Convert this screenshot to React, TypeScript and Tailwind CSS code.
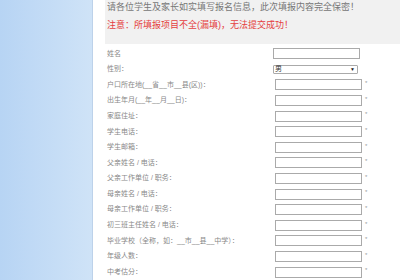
import React from 'react';

const rows = [
  '户口所在地(__省__市__县(区))：',
  '出生年月(__年__月__日)：',
  '家庭住址：',
  '学生电话：',
  '学生邮箱：',
  '父亲姓名 / 电话：',
  '父亲工作单位 / 职务：',
  '母亲姓名 / 电话：',
  '母亲工作单位 / 职务：',
  '初三班主任姓名 / 电话：',
  '毕业学校（全称，如：__市__县__中学）：',
  '年级人数：',
  '中考估分：',
];

const font = { fontFamily: '"Liberation Sans", "Noto Sans CJK SC", sans-serif' };

export default function App() {
  return (
    <div className="flex h-[280px] w-[400px] overflow-hidden bg-white" style={font}>
      {/* 左侧蓝色边栏 */}
      <div className="h-full w-[92px] shrink-0 bg-gradient-to-r from-[#b7d4f4] to-[#cfe3f7]" />
      <div className="h-full w-px bg-[#bdd2ea]" />
      <div className="flex-1 pl-[12px]">
        <div className="h-[44px] bg-[#f1f1f1] pl-[2px] pt-[1px]">
          <p className="text-[9px] leading-[13px] text-[#777]">
            请各位学生及家长如实填写报名信息，此次填报内容完全保密！
          </p>
          <p className="mt-[5px] text-[9px] leading-[13px] text-[#e54040]">
            注意：所填报项目不全(漏填)，无法提交成功！
          </p>
        </div>

        <div className="pt-[2px] text-[7px] text-[#888]">
          <div className="flex h-[15.6px] items-center">
            <span className="w-[168px] pl-[2px]">姓名</span>
            <div className="h-[11px] w-[87px] border border-[#aaa] bg-white" />
          </div>
          <div className="flex h-[15.6px] items-center">
            <span className="w-[168px] pl-[2px]">性别：</span>
            <div className="flex h-[9px] w-[85px] items-center justify-between rounded-[1px] border border-[#aaa] bg-white px-[1px] text-[7px] text-[#333]">
              <span>男</span>
              <span className="pr-[1px] text-[5px] text-[#222]">▼</span>
            </div>
          </div>
          {rows.map((label) => (
            <div key={label} className="flex h-[15.6px] items-center">
              <span className="w-[170px] whitespace-nowrap pl-[2px]">{label}</span>
              <div className="h-[11px] w-[87px] border border-[#aaa] bg-white" />
              <span className="ml-[3px] self-start pt-[2px] text-[6px] text-[#999]">*</span>
            </div>
          ))}
        </div>
      </div>
    </div>
  );
}
